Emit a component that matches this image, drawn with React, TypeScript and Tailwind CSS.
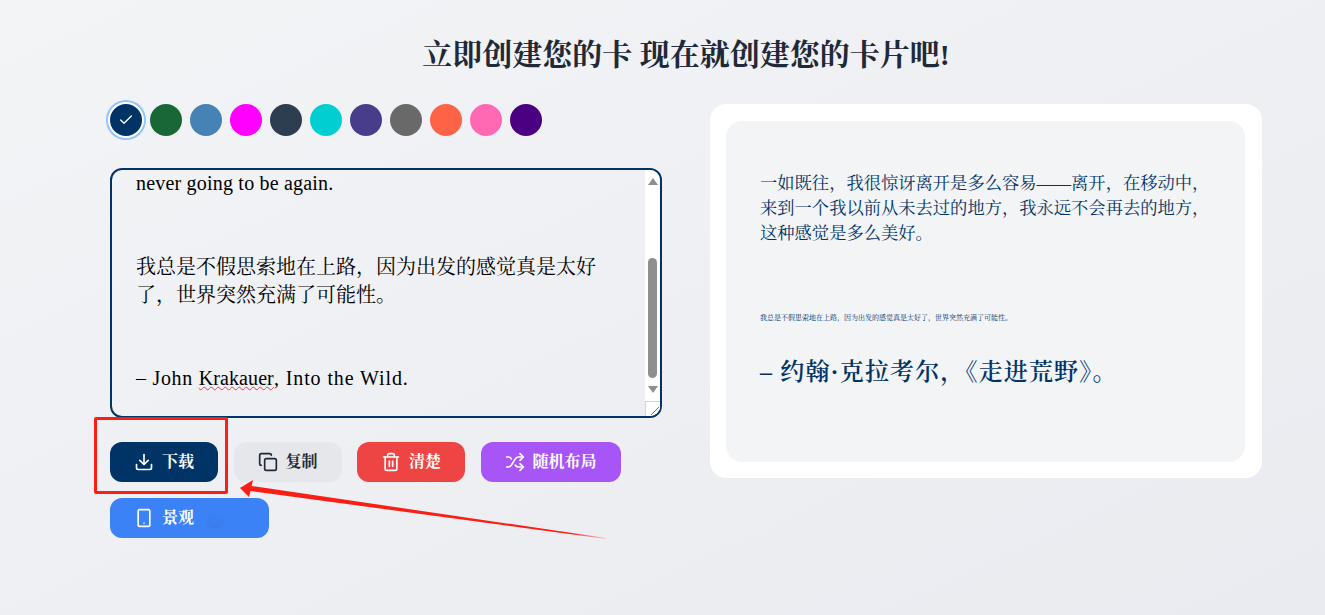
import { Check, Copy, Download, Shuffle, Smartphone, Trash2 } from 'lucide-react';

const colors = ['bg-[#003366]', 'bg-[#196637]', 'bg-[#4682b4]', 'bg-[#ff00ff]', 'bg-[#2c3e50]', 'bg-[#00ced1]', 'bg-[#483d8b]', 'bg-[#696969]', 'bg-[#ff6347]', 'bg-[#ff69b4]', 'bg-[#4b0082]'];

const App = () => {
  return (
    <div className="relative h-[615px] w-full overflow-hidden bg-gradient-to-br from-[#f3f4f6] to-[#e9ebf0] pl-[110px] pt-[37px] font-['Liberation_Serif','Noto_Serif_CJK_SC','Noto_Sans_CJK_SC',serif]">
      <div className="w-[1152px]">
        <h1 className="mb-[31px] text-center text-3xl font-bold text-[#1f2937]">立即创建您的卡 现在就创建您的卡片吧!</h1>

        <div className="grid grid-cols-2 gap-12">
          <div>
            <div className="mb-8 flex gap-2">
              {colors.map((c, i) => (
                <button
                  key={c}
                  className={`flex h-8 w-8 items-center justify-center rounded-full text-white ${c} ${i === 0 ? 'ring-2 ring-[#93c5fd] ring-offset-2' : ''}`}
                >
                  {i === 0 && <Check size={16} />}
                </button>
              ))}
            </div>

            <div className="flex h-[250px] overflow-hidden rounded-xl border-2 border-[#003366]">
              <div className="-mt-px flex-1 pl-6 pr-8 text-xl leading-7 text-black">
                <p className="tracking-[0.2px]">never going to be again.</p>
                <p className="mt-[56px]">我总是不假思索地在上路，因为出发的感觉真是太好了，世界突然充满了可能性。</p>
                <p className="mt-[55px]">
                  <span className="tracking-[0.7px]">– John </span>
                  <span className="tracking-[0.1px] underline decoration-[#f03a3a] decoration-wavy decoration-1">Krakauer</span>
                  <span className="tracking-[0.9px]">, Into the Wild.</span>
                </p>
              </div>
              <div className="flex w-[15px] flex-col items-center bg-white">
                <div className="mt-2 h-0 w-0 border-x-[5px] border-b-[7px] border-x-transparent border-b-[#8f8f8f]" />
                <div className="mt-[73px] h-[120px] w-[9px] rounded-full bg-[#8f8f8f]" />
                <div className="mt-2 h-0 w-0 border-x-[5px] border-t-[7px] border-x-transparent border-t-[#8f8f8f]" />
                <div className="mt-auto flex h-[15px] w-[15px] items-end justify-end border-l border-t border-gray-300 bg-white">
                  <svg width="12" height="12" viewBox="0 0 12 12" className="text-gray-500">
                    <path d="M3 11 L11 3 M8 11 L11 8" stroke="currentColor" strokeWidth="1" />
                  </svg>
                </div>
              </div>
            </div>

            <div className="mt-6 flex flex-wrap gap-x-[15.5px] gap-y-4 text-base font-bold">
              <button className="flex h-10 items-center gap-2 rounded-xl bg-[#003366] px-6 text-white">
                <Download size={20} />
                下载
              </button>
              <button className="flex h-10 items-center gap-2 rounded-xl bg-[#e5e7eb] px-6 text-[#1f2937]">
                <Copy size={20} />
                复制
              </button>
              <button className="flex h-10 items-center gap-2 rounded-xl bg-[#ef4444] px-6 text-white">
                <Trash2 size={20} />
                清楚
              </button>
              <button className="flex h-10 items-center gap-2 rounded-xl bg-[#a855f7] px-6 text-white">
                <Shuffle size={20} />
                随机布局
              </button>
              <button className="relative flex h-10 w-[159px] items-center gap-2 rounded-xl bg-[#3b82f6] px-6 text-white">
                <Smartphone size={20} />
                景观
                <span className="absolute left-[96px] top-[13px] h-[18px] w-[18px] rounded-full bg-gradient-to-b from-transparent to-[#3a7cec]" />
              </button>
            </div>
          </div>

          <div className="h-[374px] rounded-2xl bg-white pb-4 pl-4 pr-[17px] pt-[17px]">
            <div className="h-[341px] rounded-2xl bg-[#f3f4f6] pl-[34px] pr-[28px] pt-[50px] text-[#003366]">
              <p className="text-[17.3px] leading-[25px]">一如既往，我很惊讶离开是多么容易——离开，在移动中，来到一个我以前从未去过的地方，我永远不会再去的地方，这种感觉是多么美好。</p>
              <p className="mt-[67px] text-[7px] leading-[10px]">我总是不假思索地在上路，因为出发的感觉真是太好了，世界突然充满了可能性。</p>
              <p className="mt-[33px] text-2xl font-semibold leading-8 tracking-[1.15px]">– 约翰·克拉考尔，《走进荒野》。</p>
            </div>
          </div>
        </div>
      </div>

      <div className="absolute left-[94px] top-[417px] h-[77px] w-[134px] rounded-[2px] border-[3px] border-[#fa1e14]" />
      <svg className="absolute left-0 top-0" width="1325" height="615">
        <defs>
          <linearGradient id="tail" x1="240" y1="487" x2="606" y2="539" gradientUnits="userSpaceOnUse">
            <stop offset="0" stopColor="#fa1e14" />
            <stop offset="0.9" stopColor="#fa1e14" />
            <stop offset="1" stopColor="#fa1e14" stopOpacity="0.15" />
          </linearGradient>
        </defs>
        <path d="M240 488 L253 480 L251.5 486 L606 538 L606 539 L250.5 491 L249 497 Z" fill="url(#tail)" />
      </svg>
    </div>
  );
};

export default App;
